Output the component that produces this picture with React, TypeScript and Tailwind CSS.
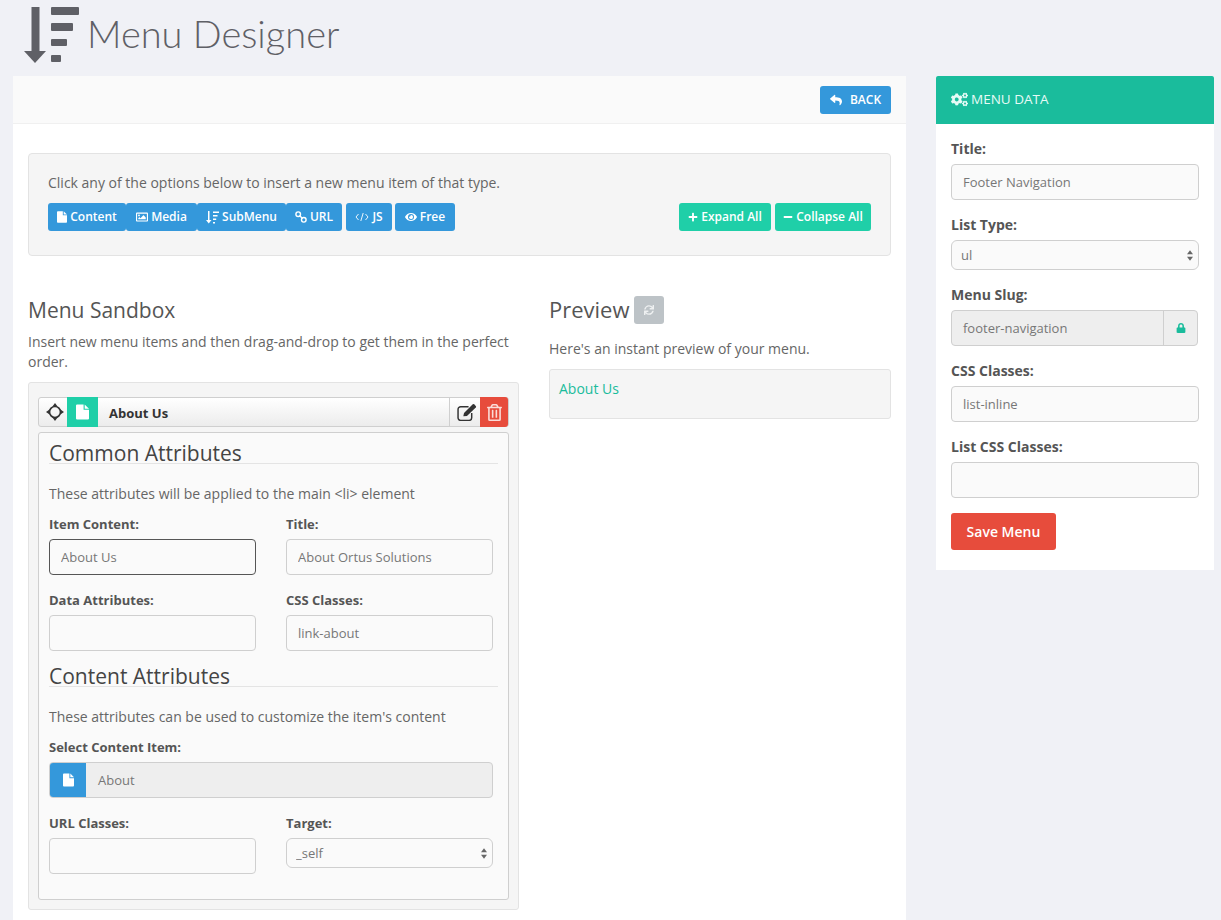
import { FaCogs, FaEye, FaLock, FaMinus, FaPlus, FaRegImage, FaRegTrashAlt, FaReply, FaSync } from "react-icons/fa";
import type { ReactNode } from "react";

const inputCls = "block w-full h-[36px] rounded-[4px] border bg-[#fafafa] px-[11px] text-[13px] text-[#777] outline-none";
const labelCls = "mb-[5px] block h-[20px] text-[14px] leading-[20px] font-bold text-[#555]";
const labelSmCls = "mb-[5px] block h-[20px] text-[13px] leading-[20px] font-bold text-[#555]";
const blueBtn = "rounded-[3px] bg-[#3498db]";
const tealBtn = "rounded-[3px] bg-[#1fcfa8]";

function Logo() {
  return (
    <svg width="58" height="58" viewBox="0 0 58 58" className="shrink-0" fill="#5f6066">
      <rect x="7.500" y="0" width="8" height="46" />
      <path d="M0 44h22L11 56z" />
      <rect x="27" y="0" width="28" height="8" rx="1" />
      <rect x="27" y="16" width="22" height="8" rx="1" />
      <rect x="27" y="32" width="16" height="7" rx="1" />
      <rect x="27" y="48" width="10" height="7" rx="1" />
    </svg>
  );
}

function FileIcon({ w, h }: { w: number; h: number }) {
  return (
    <svg width={w} height={h} viewBox="0 0 12 14" fill="currentColor">
      <path d="M0 1a1 1 0 011-1h6v5h5v8a1 1 0 01-1 1H1a1 1 0 01-1-1z" />
      <path d="M8 0l4 4H8z" />
    </svg>
  );
}

function SubIcon() {
  return (
    <svg width="13" height="13" viewBox="0 0 13 13" fill="currentColor">
      <rect x="2" y="0" width="1.500" height="10" />
      <path d="M0 9h5.500l-2.750 3.500z" />
      <rect x="7" y="0.500" width="6" height="1.500" />
      <rect x="7" y="4" width="4.500" height="1.500" />
      <rect x="7" y="7.500" width="3.200" height="1.500" />
      <rect x="7" y="11" width="2" height="1.500" />
    </svg>
  );
}

function LinkIcon() {
  return (
    <svg width="12" height="12" viewBox="0 0 12 12" fill="none" stroke="currentColor" strokeWidth="1.400">
      <circle cx="3.200" cy="3.200" r="2.300" />
      <circle cx="8.800" cy="8.800" r="2.300" />
      <path d="M4.500 4.500l3 3" />
    </svg>
  );
}

function CodeIcon() {
  return (
    <svg width="14" height="10" viewBox="0 0 14 10" fill="none" stroke="currentColor" strokeWidth="0.900">
      <path d="M3.500 2L1 5l2.500 3M10.500 2L13 5l-2.500 3M8.200 1L5.800 9" />
    </svg>
  );
}

function MoveIcon() {
  return (
    <svg width="18" height="18" viewBox="0 0 18 18">
      <circle cx="9" cy="9" r="5.500" fill="none" stroke="#333" strokeWidth="1.700" />
      <path d="M9 0l2.600 3.600H6.400zM9 18l-2.600-3.600h5.200zM0 9l3.600-2.600v5.200zM18 9l-3.600 2.600V6.400z" fill="#333" />
    </svg>
  );
}

function EditIcon() {
  return (
    <svg width="21" height="18" viewBox="0 0 20 17">
      <path d="M14 9.500V14a2.500 2.500 0 01-2.500 2.500H3.500A2.500 2.500 0 011 14V6a2.500 2.500 0 012.500-2.500H11" fill="none" stroke="#333" strokeWidth="1.400" />
      <path d="M6 12.500l.7-3L15 1.200a1 1 0 011.400 0l1.500 1.500a1 1 0 010 1.400L9.500 12.300z" fill="#333" />
    </svg>
  );
}

function Btn({ icon, label, cls }: { icon: ReactNode; label: string; cls: string }) {
  return (
    <button className={`flex h-[28px] items-center justify-center gap-[3px] text-[12px] font-semibold text-white ${cls}`}>
      {icon}
      {label}
    </button>
  );
}

function Field({ label, value, border = "border-[#cfcfcf]", small = false }: { label: string; value?: string; border?: string; small?: boolean }) {
  return (
    <div>
      <label className={small ? labelSmCls : labelCls}>{label}</label>
      <input readOnly value={value ?? ""} className={`${inputCls} ${border}`} />
    </div>
  );
}

function SelectBox({ label, value, small = false }: { label: string; value: string; small?: boolean }) {
  return (
    <div>
      <label className={small ? labelSmCls : labelCls}>{label}</label>
      <div className="relative">
        <select defaultValue={value} className="block h-[30px] w-full appearance-none rounded-[6px] border border-[#cfcfcf] bg-[#fafafa] pt-[1px] pl-[9px] text-[13px] text-[#777] outline-none">
          <option>{value}</option>
        </select>
        <svg width="6" height="11" viewBox="0 0 7 12" fill="#666" className="absolute top-[10px] right-[6px]">
          <path d="M3.500 0L7 4.500H0zM3.500 12L0 7.500h7z" />
        </svg>
      </div>
    </div>
  );
}

function SectionHead({ title }: { title: string }) {
  return (
    <h3 className="h-[26px] border-b border-[#e4e4e4] text-[21px] leading-[31px] font-normal text-[#444]">{title}</h3>
  );
}

export default function App() {
  return (
    <div className="h-[920px] overflow-hidden bg-[#f0f1f6] font-['Open_Sans',sans-serif] text-[#666]">
      <div className="flex h-[76px] items-start gap-[5px] pt-[7px] pl-[24px]">
        <Logo />
        <h1 className="mt-[2px] font-['Lato',sans-serif] text-[38px] leading-[48px] font-light text-[#5f6066]">Menu Designer</h1>
      </div>

      <div className="flex items-start gap-[30px] pr-[7px] pl-[13px]">
        <div className="h-[844px] w-[893px] bg-white">
          <div className="flex h-[48px] items-center justify-end border-b border-[#f0f0f0] bg-[#fafafa] pr-[15px]">
            <button className="flex h-[28px] w-[71px] items-center justify-center gap-[8px] rounded-[3px] bg-[#3498db] text-[12px] font-semibold text-white">
              <FaReply size={12} />
              BACK
            </button>
          </div>

          <div className="px-[15px]">
            <div className="mt-[29px] h-[103px] rounded-[4px] border border-[#e3e3e3] bg-[#f5f5f5] px-[19px] pt-[19px]">
              <p className="h-[20px] text-[14px] leading-[20px] text-[#666]">Click any of the options below to insert a new menu item of that type.</p>
              <div className="mt-[10px] flex items-center">
                <Btn icon={<FileIcon w={10} h={12} />} label="Content" cls={`w-[78px] ${blueBtn}`} />
                <Btn icon={<FaRegImage size={12} />} label="Media" cls={`w-[71px] ${blueBtn}`} />
                <Btn icon={<SubIcon />} label="SubMenu" cls={`w-[89px] ${blueBtn}`} />
                <Btn icon={<LinkIcon />} label="URL" cls={`w-[56px] ${blueBtn}`} />
                <Btn icon={<CodeIcon />} label="JS" cls={`ml-[4px] w-[46px] ${blueBtn}`} />
                <Btn icon={<FaEye size={12} />} label="Free" cls={`ml-[3px] w-[60px] ${blueBtn}`} />
                <Btn icon={<FaPlus size={10} />} label="Expand All" cls={`ml-auto w-[92px] ${tealBtn}`} />
                <Btn icon={<FaMinus size={10} />} label="Collapse All" cls={`ml-[4px] w-[96px] ${tealBtn}`} />
              </div>
            </div>

            <div className="mt-[36px] flex gap-[30px]">
              <div className="w-[491px]">
                <h2 className="h-[36px] text-[21px] leading-[36px] font-normal text-[#555]">Menu Sandbox</h2>
                <p className="mt-[4px] text-[14px] leading-[20px] text-[#666]">Insert new menu items and then drag-and-drop to get them in the perfect order.</p>
                <div className="mt-[10px] h-[528px] rounded-[3px] border border-[#e3e3e3] bg-[#f5f5f5] px-[9px] pt-[14px]">
                  <div className="flex h-[30px] items-stretch rounded-[3px] border border-[#cfcfcf] bg-gradient-to-b from-white to-[#ececec]">
                    <div className="flex w-[28px] items-center justify-center pl-[3px]"><MoveIcon /></div>
                    <div className="-my-px flex w-[31px] items-center justify-center bg-[#1fcfa8] text-white"><FileIcon w={13} h={16} /></div>
                    <div className="flex flex-1 items-center pt-[3px] pl-[11px] text-[13px] font-bold text-[#333]">About Us</div>
                    <div className="flex w-[31px] items-center justify-center border-l border-[#cfcfcf] pl-[4px]"><EditIcon /></div>
                    <div className="-my-px flex w-[28px] items-center justify-center rounded-r-[3px] bg-[#e74c3c] text-[#fbdcd8]"><FaRegTrashAlt size={17} /></div>
                  </div>

                  <div className="mt-[5px] h-[468px] rounded-[3px] border border-[#cfcfcf] bg-[#fafafa] px-[10px] pt-[5px] pb-[20px]">
                    <SectionHead title="Common Attributes" />
                    <p className="mt-[20px] h-[20px] text-[14px] leading-[20px]">These attributes will be applied to the main &lt;li&gt; element</p>
                    <div className="mt-[10px] grid grid-cols-[207px_207px] gap-x-[30px] gap-y-[15px]">
                      <Field small label="Item Content:" value="About Us" border="border-[#555]" />
                      <Field small label="Title:" value="About Ortus Solutions" />
                      <Field small label="Data Attributes:" />
                      <Field small label="CSS Classes:" value="link-about" />
                    </div>
                    <div className="mt-[10px]"><SectionHead title="Content Attributes" /></div>
                    <p className="mt-[20px] h-[20px] text-[14px] leading-[20px]">These attributes can be used to customize the item's content</p>
                    <label className={`mt-[10px] ${labelSmCls}`}>Select Content Item:</label>
                    <div className="flex h-[36px] w-[444px] overflow-hidden rounded-[4px] border border-[#cfcfcf] bg-[#eee]">
                      <div className="flex w-[36px] items-center justify-center bg-[#3498db] text-white"><FileIcon w={11} h={14} /></div>
                      <div className="flex items-center pt-[1px] pl-[12px] text-[13px] text-[#777]">About</div>
                    </div>
                    <div className="mt-[15px] grid grid-cols-[207px_207px] gap-x-[30px]">
                      <Field small label="URL Classes:" />
                      <SelectBox small label="Target:" value="_self" />
                    </div>
                  </div>
                </div>
              </div>

              <div className="w-[342px]">
                <h2 className="flex h-[36px] items-center gap-[4px] text-[22px] leading-[36px] font-normal text-[#555]">
                  <span className="-mt-[2px]">Preview</span>
                  <span className="flex h-[28px] w-[30px] items-center justify-center rounded-[3px] bg-[#bdc3c7] text-[#eef0f1]"><FaSync size={10} /></span>
                </h2>
                <p className="mt-[11px] text-[14px] leading-[20px] text-[#666]">Here's an instant preview of your menu.</p>
                <div className="mt-[10px] h-[50px] rounded-[3px] border border-[#e3e3e3] bg-[#f5f5f5] px-[9px] pt-[9px] text-[14px] leading-[20px] text-[#1abc9c]">About Us</div>
              </div>
            </div>
          </div>
        </div>

        <div className="h-[494px] w-[278px] bg-white">
          <div className="flex h-[48px] items-center gap-[3px] rounded-t-[2px] bg-[#1abc9c] pb-[1px] pl-[15px] text-[13.500px] text-[#e6fbf6]">
            <FaCogs size={17} />
            MENU DATA
          </div>
          <div className="px-[15px] pt-[15px]">
            <Field label="Title:" value="Footer Navigation" />
            <div className="mt-[15px]"><SelectBox label="List Type:" value="ul" /></div>
            <div className="mt-[15px]">
              <label className={labelCls}>Menu Slug:</label>
              <div className="flex h-[36px] w-[247px] overflow-hidden rounded-[4px] border border-[#cfcfcf] bg-[#eee]">
                <div className="flex flex-1 items-center pt-[1px] pl-[11px] text-[13px] text-[#777]">footer-navigation</div>
                <div className="flex w-[34px] items-center justify-center border-l border-[#cfcfcf] text-[#1abc9c]"><FaLock size={10} /></div>
              </div>
            </div>
            <div className="mt-[15px]"><Field label="CSS Classes:" value="list-inline" /></div>
            <div className="mt-[15px]"><Field label="List CSS Classes:" /></div>
            <button className="mt-[15px] h-[37px] w-[105px] rounded-[3px] bg-[#e74c3c] text-[14px] font-semibold text-white">Save Menu</button>
          </div>
        </div>
      </div>
    </div>
  );
}
